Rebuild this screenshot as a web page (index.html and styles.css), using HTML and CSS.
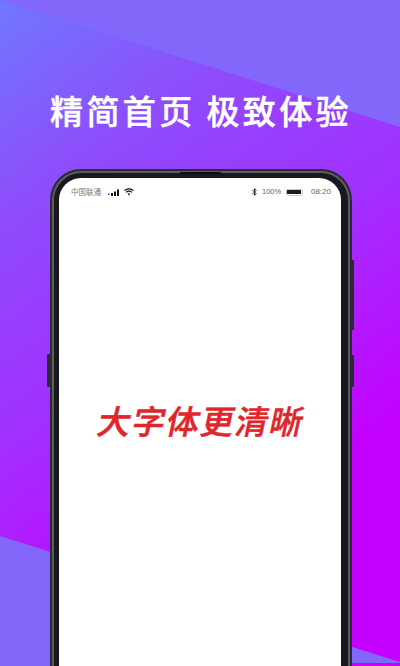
FILE: index.html
```html
<!DOCTYPE html>
<html lang="zh-CN">
<head>
<meta charset="utf-8">
<title>精简首页 极致体验</title>
<link rel="stylesheet" href="styles.css">
</head>
<body>
<main class="page">
  <div class="wedge wedge-top"></div>
  <div class="wedge wedge-bottom"></div>
  <h1 class="headline">精简首页 极致体验</h1>
  <section class="phone">
    <span class="key key-left"></span>
    <span class="key key-right-a"></span>
    <span class="key key-right-b"></span>
    <span class="speaker"></span>
    <div class="band">
      <div class="bezel">
        <div class="screen">
          <div class="status">
            <div class="status-group">
              <span class="carrier">中国联通</span>
              <svg class="signal" width="12" height="7" viewBox="0 0 12 7"><path d="M0 4.6h1.4v1.2H0zM3 4h2v3H3zM6 2.4h2V7H6zM9 .6h2V7H9z" fill="#111"/></svg>
              <svg class="wifi" width="10" height="8" viewBox="0 0 10 8" fill="none" stroke="#111" stroke-width="1.1"><path d="M.4 2.6C3 .3 7 .3 9.6 2.6M2 4.3c1.7-1.4 4.3-1.4 6 0"/><path d="M3.6 5.8c.8-.5 2-.5 2.8 0L5 7.6z" fill="#111" stroke="none"/></svg>
            </div>
            <div class="status-group">
              <svg class="bt" width="5" height="8" viewBox="0 0 5 8" fill="none" stroke="#333" stroke-width="1"><path d="M.3 2l4 3.6L2.5 7.4V.6l1.8 1.8L.3 6"/></svg>
              <span class="pct">100%</span>
              <span class="battery"><span class="battery-fill"></span></span>
              <span class="time">08:20</span>
            </div>
          </div>
          <p class="slogan">大字体更清晰</p>
        </div>
      </div>
    </div>
  </section>
</main>
</body>
</html>
```
FILE: styles.css
```css
html, body {
  margin: 0;
  padding: 0;
}
.page {
  position: relative;
  width: 400px;
  height: 666px;
  overflow: hidden;
  display: flex;
  flex-direction: column;
  align-items: flex-start;
  background: linear-gradient(145deg, #6f78ff 0%, #8f4bfb 24%, #a22fff 48%, #c400ff 74%);
  font-family: "Noto Sans CJK SC", "Noto Sans", sans-serif;
}
.wedge {
  position: absolute;
  left: 0;
  top: 0;
  width: 400px;
  height: 666px;
  background: #8367fb;
}
.wedge-top {
  clip-path: polygon(0 0, 400px 0, 400px 127px);
}
.wedge-bottom {
  clip-path: polygon(0 536px, 400px 662px, 400px 663px, 351px 663px, 50px 666px, 0 666px);
}
.headline {
  position: relative;
  align-self: stretch;
  margin: 0;
  height: 169px;
  box-sizing: border-box;
  padding-top: 86px;
  padding-left: 2px;
  text-align: center;
  color: #fff;
  font-size: 33px;
  line-height: 48px;
  font-weight: 500;
  -webkit-text-stroke: 0.45px #fff;
  letter-spacing: 3.4px;
  white-space: pre;
}
.phone {
  position: relative;
  flex: 1;
  width: 301.5px;
  margin-left: 50px;
  box-sizing: border-box;
  padding: 1.5px 1.5px 0;
  background: #2b2b33;
  border-radius: 31px 31px 0 0;
}
.band {
  height: 100%;
  box-sizing: border-box;
  padding: 2.5px 2.5px 0;
  background: #5c5c63;
  border-radius: 29px 29px 0 0;
}
.bezel {
  height: 100%;
  box-sizing: border-box;
  padding: 5px 6.5px 0 5px;
  background: #19191d;
  border-radius: 27px 27px 0 0;
}
.screen {
  height: 100%;
  background: #fff;
  border-radius: 22px 22px 0 0;
  display: flex;
  flex-direction: column;
  align-items: stretch;
}
.key {
  position: absolute;
  background: #2a2a32;
}
.key-left {
  left: -3px;
  top: 185px;
  width: 3px;
  height: 33px;
  border-radius: 1px 0 0 1px;
}
.key-right-a {
  right: -2px;
  top: 91px;
  width: 2px;
  height: 70px;
}
.key-right-b {
  right: -2px;
  top: 186px;
  width: 2px;
  height: 32px;
}
.speaker {
  position: absolute;
  left: 130px;
  top: 2.5px;
  width: 41px;
  height: 2.5px;
  background: #0e0e12;
  border-radius: 1px;
}
.status {
  display: flex;
  justify-content: space-between;
  align-items: center;
  height: 10px;
  margin-top: 9px;
  padding: 0 10px 0 12px;
  color: #666;
  font-size: 7.5px;
  line-height: 10px;
}
.status-group {
  display: flex;
  align-items: center;
}
.carrier {
  width: 30px;
  color: #777;
  white-space: nowrap;
}
.signal {
  margin-left: 7px;
}
.wifi {
  margin-left: 4px;
}
.pct {
  margin-left: 5px;
  width: 20px;
  font-family: "Liberation Sans", sans-serif;
}
.battery {
  box-sizing: border-box;
  width: 17px;
  height: 7px;
  margin-left: 4px;
  padding: 0.5px;
  border: 1px solid #c8c8c8;
  border-radius: 1.5px;
  display: flex;
}
.battery-fill {
  flex: 1;
  background: #1c1c1c;
}
.time {
  margin-left: 8px;
  font-size: 8px;
  font-family: "Liberation Sans", sans-serif;
}
.slogan {
  margin: 201px 0 0;
  padding-left: 4px;
  text-align: center;
  color: #e0252b;
  font-size: 33px;
  line-height: 44px;
  font-weight: 500;
  -webkit-text-stroke: 0.5px #e0252b;
  letter-spacing: 1.4px;
  white-space: nowrap;
  transform: skewX(-12deg);
}
```
